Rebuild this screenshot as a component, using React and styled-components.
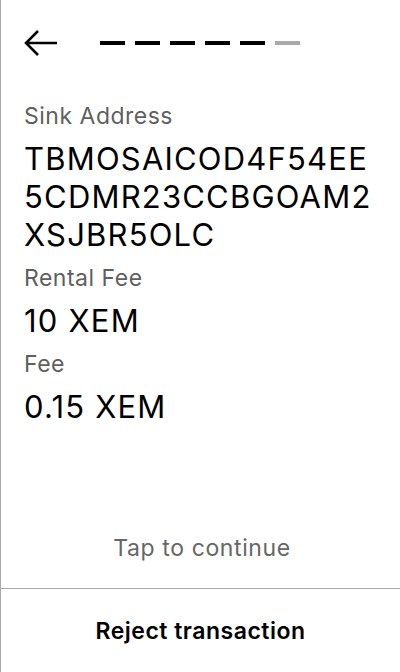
import React from "react";
import styled, { createGlobalStyle } from "styled-components";

const GlobalStyle = createGlobalStyle`
  html, body {
    margin: 0;
    padding: 0;
    background: #fff;
    font-family: Inter, "Noto Sans", sans-serif;
    -webkit-font-smoothing: antialiased;
  }
  * {
    box-sizing: border-box;
  }
`;

const Screen = styled.div`
  display: flex;
  flex-direction: column;
  width: 400px;
  height: 672px;
  border-left: 1px solid #a9a9a9;
  color: #000;
`;

const Header = styled.div`
  display: flex;
  align-items: center;
  gap: 42px;
  padding: 29px 0 0 21px;
`;

const BackButton = styled.button`
  display: flex;
  padding: 0;
  border: none;
  background: none;
  cursor: pointer;
`;

const Progress = styled.div`
  display: flex;
  gap: 10px;
`;

const Dash = styled.span`
  width: 25px;
  height: 4px;
  background: ${(p) => (p.$done ? "#000" : "#aaaaaa")};
`;

const Body = styled.div`
  flex: 1;
  display: flex;
  flex-direction: column;
  padding: 45px 20px 0 23px;
`;

const Details = styled.div`
  display: flex;
  flex-direction: column;
  gap: 10px;
`;

const Label = styled.div`
  font-size: 23px;
  line-height: 28px;
  letter-spacing: 0.5px;
  color: #5f5f5f;
`;

const Value = styled.div`
  font-size: 31px;
  line-height: 38px;
  letter-spacing: 1.2px;
  word-break: break-all;
`;

const Hint = styled.div`
  margin-top: auto;
  padding-bottom: 26px;
  text-align: center;
  font-size: 23px;
  line-height: 28px;
  letter-spacing: 0.6px;
  color: #666;
`;

const RejectButton = styled.button`
  height: 84px;
  border: none;
  border-top: 1px solid #a9a9a9;
  background: #fff;
  font-family: inherit;
  font-size: 23px;
  font-weight: 600;
  letter-spacing: 0.5px;
  color: #000;
  cursor: pointer;
`;

function BackArrow() {
  return (
    <svg width="36" height="28" viewBox="0 0 36 28" fill="none">
      <path
        d="M35 14 H4 M16 2 L4 14 L16 26"
        stroke="#000"
        strokeWidth="2.5"
      />
    </svg>
  );
}

const fields = [
  { label: "Sink Address", value: "TBMOSAICOD4F54EE5CDMR23CCBGOAM2XSJBR5OLC" },
  { label: "Rental Fee", value: "10 XEM" },
  { label: "Fee", value: "0.15 XEM" },
];

export default function App() {
  const steps = [true, true, true, true, true, false];
  return (
    <>
      <GlobalStyle />
      <Screen>
        <Header>
          <BackButton aria-label="Back">
            <BackArrow />
          </BackButton>
          <Progress>
            {steps.map((done, i) => (
              <Dash key={i} $done={done} />
            ))}
          </Progress>
        </Header>
        <Body>
          <Details>
            {fields.map((f) => (
              <React.Fragment key={f.label}>
                <Label>{f.label}</Label>
                <Value>{f.value}</Value>
              </React.Fragment>
            ))}
          </Details>
          <Hint>Tap to continue</Hint>
        </Body>
        <RejectButton>Reject transaction</RejectButton>
      </Screen>
    </>
  );
}
